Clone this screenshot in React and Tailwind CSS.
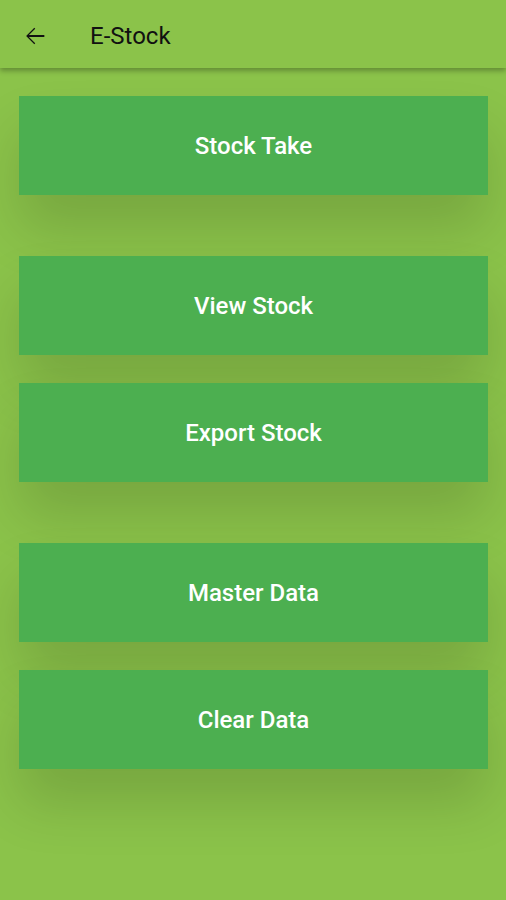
import React from "react";

const groups = [["Stock Take"], ["View Stock", "Export Stock"], ["Master Data", "Clear Data"]];

const App = () => {
  return (
    <div className="w-[506px] h-[900px] bg-[#8bc34a] overflow-hidden" style={{ fontFamily: "Roboto, 'Noto Sans', sans-serif" }}>
      <div className="relative z-10 h-[68px] flex items-center bg-[#8bc34a] shadow-[0_3px_5px_rgba(0,0,0,0.28)]">
        <button className="ml-[21px] w-[28px] h-[28px] flex items-center justify-center mt-[4px]">
          <svg width="28" height="28" viewBox="0 0 24 24">
            <path d="M20 11.2H6.8l5.4-5.4-.8-.8L4.4 12l7 7 .8-.8-5.4-5.4H20z" fill="#111" />
          </svg>
        </button>
        <h1 className="ml-[41px] mt-[4px] text-[24px] font-normal text-[#111]">E-Stock</h1>
      </div>
      <div className="pl-[19px] pr-[18px] pt-[28px] flex flex-col gap-[61px]">
        {groups.map((g, i) => (
          <div key={i} className="flex flex-col gap-[28px]">
            {g.map((label) => (
              <button
                key={label}
                className="h-[99px] w-full bg-[#4caf50] text-white text-[24px] font-medium shadow-[0_35px_55px_rgba(0,0,0,0.14)]"
              >
                {label}
              </button>
            ))}
          </div>
        ))}
      </div>
    </div>
  );
};

export default App;
